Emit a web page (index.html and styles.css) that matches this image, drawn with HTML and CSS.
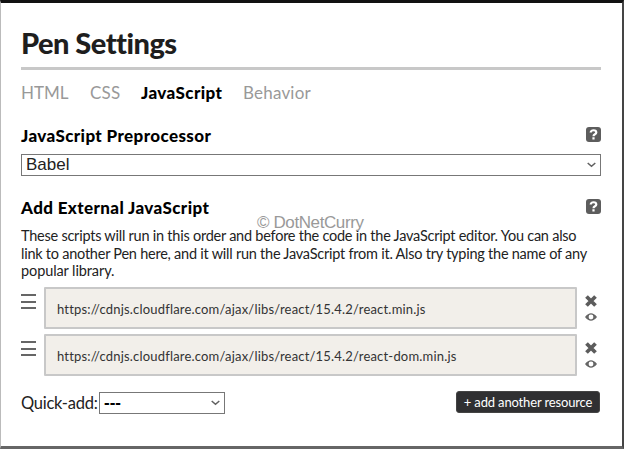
FILE: index.html
```html
<!DOCTYPE html>
<html lang="en">
<head>
<meta charset="utf-8">
<title>Pen Settings</title>
<link rel="stylesheet" href="styles.css">
</head>
<body>
<svg class="defs" width="0" height="0">
  <symbol id="help" viewBox="0 0 15 15"><rect width="15" height="15" rx="3" fill="#5d5d5d"/><path d="M4.700 5.500C4.700 2.500 10.300 2.500 10.300 5.500C10.300 7.500 7.500 7 7.500 9.200M7.500 10.300V12.500" fill="none" stroke="#fff" stroke-width="2.200"/></symbol>
  <symbol id="chevron" viewBox="0 0 9 6"><path d="M.7 1L4.5 4.300L8.3 1" fill="none" stroke="#606060" stroke-width="1.5"/></symbol>
  <symbol id="cross" viewBox="0 0 12 12"><path d="M1.5 1.500L10.500 10.500M10.500 1.500L1.500 10.500" stroke="#5c5c5c" stroke-width="3.800"/></symbol>
  <symbol id="eye" viewBox="0 0 12 8"><path fill-rule="evenodd" d="M0 4Q6-3.500 12 4Q6 11.500 0 4ZM6 1.600A2.400 2.400 0 1 0 6 6.400A2.400 2.400 0 1 0 6 1.600Z" fill="#666"/></symbol>
</svg>
<main class="panel">
  <h1 class="title"><span>Pen Settings</span></h1>
  <nav class="tabs">
    <span class="tab html">HTML</span><span class="tab css">CSS</span><span class="tab js active">JavaScript</span><span class="tab behavior">Behavior</span>
  </nav>
  <div class="section-head"><h2 class="pre">JavaScript Preprocessor</h2><svg class="help"><use href="#help"/></svg></div>
  <div class="select">Babel<svg class="chevron"><use href="#chevron"/></svg></div>
  <div class="section-head second"><h2 class="ext">Add External JavaScript</h2><svg class="help"><use href="#help"/></svg></div>
  <p class="description"><span class="l1">These scripts will run in this order and before the code in the JavaScript editor. You can also</span><br><span class="l2">link to another Pen here, and it will run the JavaScript from it. Also try typing the name of any</span><br><span class="l3">popular library.</span></p>
  <div class="resource">
    <div class="grip"><i></i><i></i><i></i></div>
    <div class="url">https://cdnjs.cloudflare.com/ajax/libs/react/15.4.2/react.min.js</div>
    <div class="actions"><svg class="cross"><use href="#cross"/></svg><svg class="eye"><use href="#eye"/></svg></div>
  </div>
  <div class="resource">
    <div class="grip"><i></i><i></i><i></i></div>
    <div class="url">https://cdnjs.cloudflare.com/ajax/libs/react/15.4.2/react-dom.min.js</div>
    <div class="actions"><svg class="cross"><use href="#cross"/></svg><svg class="eye"><use href="#eye"/></svg></div>
  </div>
  <div class="footer">
    <span class="quick">Quick-add:</span>
    <div class="select small">---<svg class="chevron"><use href="#chevron"/></svg></div>
    <button class="add">+ add another resource</button>
  </div>
  <div class="watermark">© DotNetCurry</div>
</main>
</body>
</html>
```

FILE: styles.css
```css
* { box-sizing: border-box; }
body { margin: 0; font-family: Lato, sans-serif; color: #222; }
.defs { position: absolute; }
.panel { position: relative; width: 624px; height: 449px; overflow: hidden; background: #fff; border: solid; border-width: 3px 2px 3px 1px; border-color: #111 #454545 #666 #bbb; padding: 0 21px 0 20px; }
.title { margin: 0; height: 67px; padding-top: 22px; border-bottom: 3px solid #c8c8c8; font: 900 29px/36px Lato, sans-serif; letter-spacing: -0.52px; font-variant-ligatures: none; color: #1e1e1e; white-space: nowrap; }
.tabs { display: flex; height: 48px; padding-top: 11px; font-size: 17px; line-height: 24px; color: #999; }
.tab { white-space: nowrap; }
.html { width: 69px; }
.css { width: 51px; letter-spacing: .2px; }
.js { width: 102px; }
.behavior { letter-spacing: .2px; }
.active { color: #000; font-weight: 900; letter-spacing: .4px; }
.section-head { display: flex; justify-content: space-between; height: 36px; padding-top: 6px; }
.section-head h2 { margin: 0; font-size: 17px; font-weight: 900; letter-spacing: .38px; line-height: 24px; color: #000; white-space: nowrap; }
.help { width: 15px; height: 15px; margin-top: 3px; }
.select { display: flex; align-items: center; justify-content: space-between; height: 22px; padding: 0 4px; border: 1px solid #777; font: 17px/20px "Liberation Sans", Arial, sans-serif; }
.chevron { width: 9px; height: 6px; }
.second { height: 50px; padding-top: 20px; }
.description { margin: 0; height: 61px; padding-top: 1px; font-size: 14.5px; line-height: 17.5px; letter-spacing: -0.24px; white-space: nowrap; }
.l3 { letter-spacing: -0.1px; }
.resource { display: flex; height: 42px; margin-bottom: 5px; }
.grip { width: 15px; margin-right: 8px; padding-top: 7px; }
.grip i { display: block; height: 2px; margin-bottom: 4.5px; background: #666; }
.url { width: 533px; height: 42px; border: 2px solid #c8c8c8; border-radius: 1px; background: #f2efea; padding-left: 11px; font-size: 13px; letter-spacing: .19px; line-height: 41px; color: #333; white-space: nowrap; }
.actions { width: 12px; margin-left: 8px; padding-top: 8px; }
.actions svg { display: block; width: 12px; }
.cross { height: 12px; }
.eye { height: 8px; margin-top: 6px; }
.footer { display: flex; align-items: center; height: 24px; margin-top: 15px; }
.quick { width: 78px; font-size: 16.5px; letter-spacing: -0.25px; white-space: nowrap; }
.small { width: 126px; font-weight: 700; color: #000; }
.add { width: 144px; height: 22px; margin: -2px 1px 0 auto; padding: 0; border: 1px solid #444; border-radius: 3px; background: #303032; color: #fff; font: 13px/20px Lato, sans-serif; letter-spacing: -0.15px; white-space: nowrap; }
.watermark { position: absolute; left: 256px; top: 210px; font: 17px/20px "Liberation Sans", Arial, sans-serif; letter-spacing: -0.4px; color: #999; white-space: nowrap; }
```
